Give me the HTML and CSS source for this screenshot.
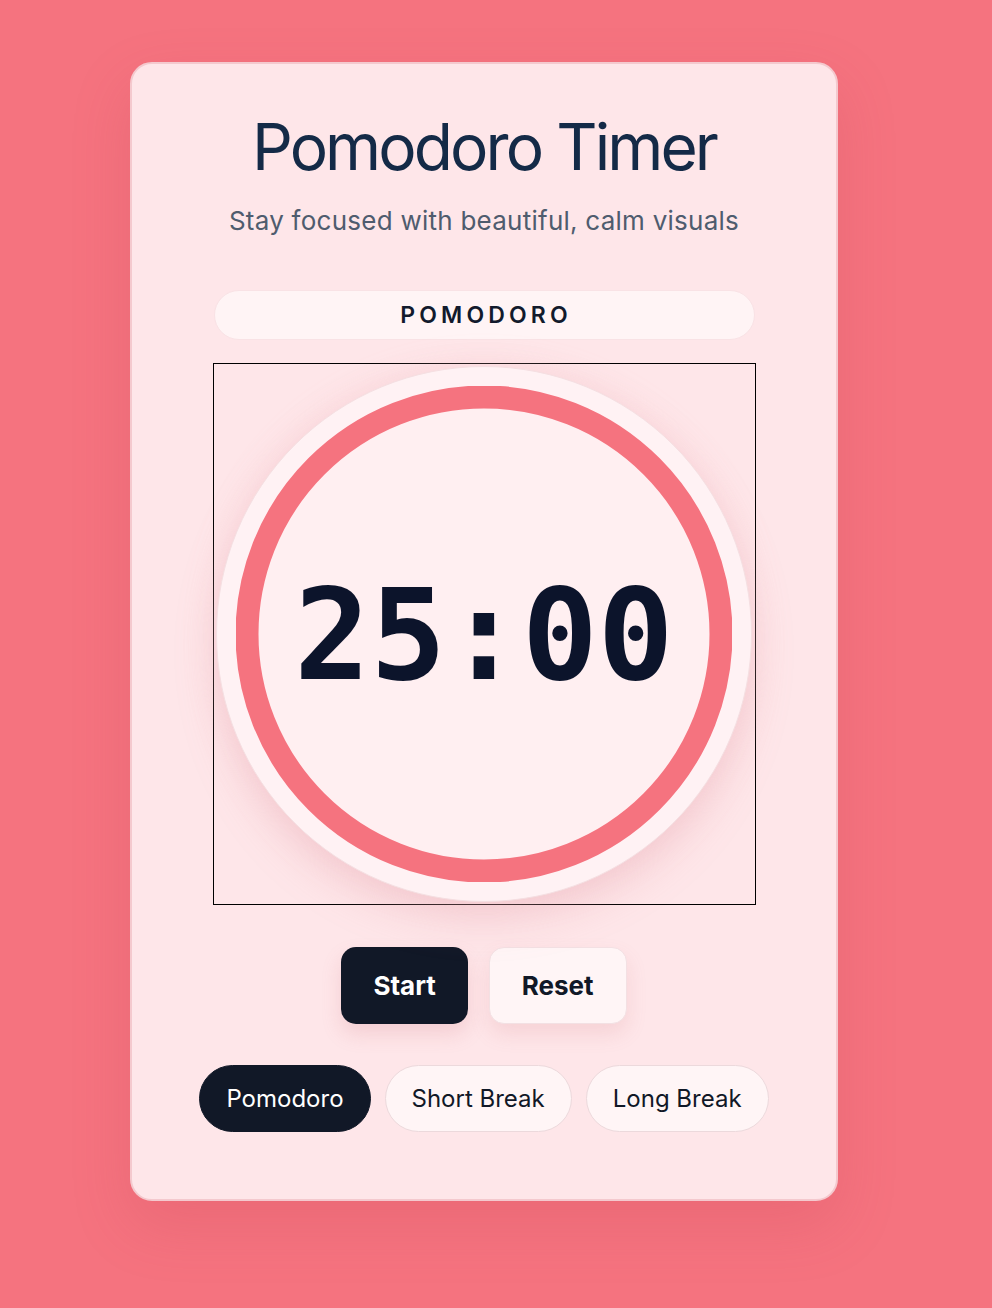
FILE: index.html
```html
<!DOCTYPE html>
<html lang="en">
<head>
<meta charset="utf-8">
<title>Pomodoro Timer</title>
<link rel="stylesheet" href="styles.css">
</head>
<body>
<div class="page">
  <main class="card">
    <h1 class="title">Pomodoro Timer</h1>
    <p class="subtitle">Stay focused with beautiful, calm visuals</p>
    <div class="mode-label">POMODORO</div>
    <div class="dial-box">
      <div class="dial">
        <svg class="ring" viewBox="0 0 496 496" width="496" height="496" aria-hidden="true">
          <circle cx="248" cy="248" r="237" fill="#ffeff1" stroke="#f5737f" stroke-width="23"/>
        </svg>
        <div class="time">25:00</div>
      </div>
    </div>
    <div class="controls">
      <button class="btn btn-primary">Start</button>
      <button class="btn btn-secondary">Reset</button>
    </div>
    <div class="modes">
      <button class="mode mode-active">Pomodoro</button>
      <button class="mode">Short Break</button>
      <button class="mode">Long Break</button>
    </div>
  </main>
</div>
</body>
</html>
```
FILE: styles.css
```css
html, body {
  margin: 0;
  padding: 0;
}
body {
  background: #f5737f;
  font-family: Inter, "Noto Sans", "Liberation Sans", sans-serif;
  min-height: 1308px;
}
.page {
  width: 968px;
  display: flex;
  justify-content: center;
  padding-top: 62px;
}
.card {
  box-sizing: border-box;
  width: 708px;
  height: 1139px;
  padding: 48px 0 0;
  background: #fee6e9;
  border: 2px solid #f4c9ce;
  border-radius: 22px;
  box-shadow: 0 24px 60px rgba(190, 60, 75, 0.18);
  display: flex;
  flex-direction: column;
  align-items: center;
}
.title {
  margin: 0;
  font-size: 64px;
  line-height: 70px;
  font-weight: 400;
  color: #142a47;
  letter-spacing: -2.9px;
}
.subtitle {
  margin: 21px 0 0;
  font-size: 26px;
  line-height: 36px;
  color: #4f5c6e;
  letter-spacing: 0.25px;
}
.mode-label {
  box-sizing: border-box;
  margin-top: 51px;
  width: 541px;
  height: 50px;
  border-radius: 25px;
  background: #fff4f5;
  border: 1px solid #f9e2e5;
  display: flex;
  align-items: center;
  justify-content: center;
  font-size: 23px;
  font-weight: 600;
  letter-spacing: 0.18em;
  padding-left: 0.18em;
  color: #121a2c;
}
.dial-box {
  box-sizing: border-box;
  margin-top: 23px;
  width: 543px;
  height: 542px;
  border: 1px solid #000;
  display: flex;
  align-items: center;
  justify-content: center;
}
.dial {
  position: relative;
  width: 536px;
  height: 536px;
  border-radius: 50%;
  background: #fff2f4;
  border: 1px solid #f5dfe2;
  box-sizing: border-box;
  box-shadow: 0 18px 40px rgba(220, 140, 150, 0.25), 0 0 30px rgba(250, 200, 205, 0.35);
  display: flex;
  align-items: center;
  justify-content: center;
}
.ring {
  display: block;
}
.time {
  position: absolute;
  inset: 0;
  display: flex;
  align-items: center;
  justify-content: center;
  font-family: "DejaVu Sans Mono", "Liberation Mono", monospace;
  font-weight: 700;
  font-size: 126px;
  color: #0c142b;
  padding-top: 2px;
}
.controls {
  margin-top: 42px;
  display: flex;
  gap: 21px;
}
.btn {
  font-family: inherit;
  height: 77px;
  padding: 0 32px;
  border-radius: 15px;
  font-size: 26px;
  font-weight: 700;
  cursor: pointer;
}
.btn-primary {
  background: #111827;
  color: #ffffff;
  border: none;
  box-shadow: 0 10px 20px rgba(200, 100, 110, 0.18);
}
.btn-secondary {
  background: #fff5f6;
  color: #111827;
  border: 1px solid #f3e0e3;
  box-shadow: 0 10px 20px rgba(200, 100, 110, 0.15);
}
.modes {
  margin-top: 41px;
  display: flex;
  gap: 14px;
}
.mode {
  font-family: inherit;
  height: 67px;
  padding: 0 26px;
  border-radius: 34px;
  font-size: 24px;
  font-weight: 400;
  background: #fff5f6;
  color: #111827;
  border: 1px solid #ecd9dc;
  cursor: pointer;
}
.mode-active {
  background: #111827;
  color: #ffffff;
  border-color: #111827;
}
```
